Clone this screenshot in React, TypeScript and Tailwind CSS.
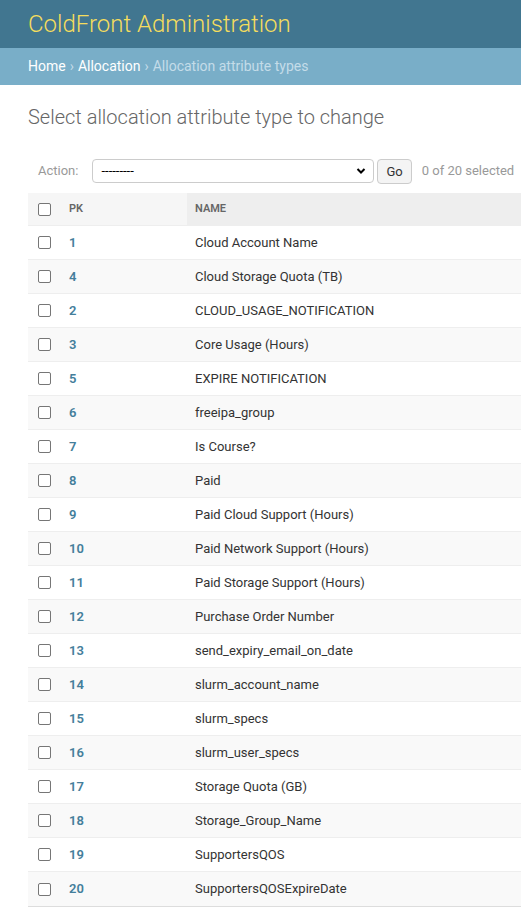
import React from "react";

const rows: [number, string][] = [
  [1, "Cloud Account Name"],
  [4, "Cloud Storage Quota (TB)"],
  [2, "CLOUD_USAGE_NOTIFICATION"],
  [3, "Core Usage (Hours)"],
  [5, "EXPIRE NOTIFICATION"],
  [6, "freeipa_group"],
  [7, "Is Course?"],
  [8, "Paid"],
  [9, "Paid Cloud Support (Hours)"],
  [10, "Paid Network Support (Hours)"],
  [11, "Paid Storage Support (Hours)"],
  [12, "Purchase Order Number"],
  [13, "send_expiry_email_on_date"],
  [14, "slurm_account_name"],
  [15, "slurm_specs"],
  [16, "slurm_user_specs"],
  [17, "Storage Quota (GB)"],
  [18, "Storage_Group_Name"],
  [19, "SupportersQOS"],
  [20, "SupportersQOSExpireDate"],
];

function Checkbox() {
  return <span className="block h-[13px] w-[13px] rounded-[2px] border border-[#767676] bg-white" />;
}

export default function App() {
  return (
    <div className="min-h-screen overflow-hidden bg-white font-['Roboto',sans-serif] text-[13px] text-[#333]">
      {/* Header */}
      <div className="flex h-[48px] items-center bg-[#417690] px-[28px]">
        <h1 className="text-[24px] font-light leading-none text-[#f5dd5d]">ColdFront Administration</h1>
      </div>

      {/* Breadcrumbs */}
      <div className="flex h-[37px] items-center bg-[#79aec8] px-[28px] text-[14px] text-white">
        <a className="text-white">Home</a>
        <span className="mx-[4px] text-[#c4dce8]">›</span>
        <a className="text-white">Allocation</a>
        <span className="mx-[4px] text-[#c4dce8]">›</span>
        <span className="text-[#c4dce8]">Allocation attribute types</span>
      </div>

      <div className="pl-[28px]">
        <h1 className="mt-[20px] text-[20px] font-light leading-[24px] text-[#666]">
          Select allocation attribute type to change
        </h1>

        {/* Actions */}
        <div className="mt-[22px] flex h-[42px] items-start pl-[10px] pt-[8px] whitespace-nowrap">
          <span className="flex h-[24px] items-center text-[13px] text-[#999]">Action:</span>
          <div className="relative ml-[14px] flex h-[24px] w-[282px] items-center rounded-[4px] border border-[#ccc] bg-white px-[8px] text-[13px] text-black">
            ---------
            <svg className="absolute right-[7px] top-[7px]" width="10" height="8" viewBox="0 0 10 8">
              <path d="M1.5 2 L5 5.5 L8.5 2" fill="none" stroke="#000" strokeWidth="2" />
            </svg>
          </div>
          <button className="ml-[3px] h-[25px] rounded-[4px] border border-[#ccc] bg-[#f4f4f4] px-[8px] text-[13px] text-[#333]">
            Go
          </button>
          <span className="ml-[10px] flex h-[24px] items-center text-[13px] text-[#999]">0 of 20 selected</span>
        </div>

        {/* Table */}
        <div className="border-b border-[#ddd]">
          <div className="grid h-[33px] grid-cols-[31px_128px_1fr] items-center border-b border-[#eee] bg-[#f6f6f6] text-[11px] font-semibold uppercase text-[#666]">
            <div className="pl-[10px]">
              <Checkbox />
            </div>
            <div className="pl-[10px]">PK</div>
            <div className="flex h-full items-center bg-[#eee] pl-[8px]">Name</div>
          </div>
          {rows.map(([pk, name], i) => (
            <div
              key={pk}
              className={`grid h-[34px] grid-cols-[31px_128px_1fr] items-center border-b border-[#eee] last:border-b-0 ${
                i % 2 === 1 ? "bg-[#f9f9f9]" : "bg-white"
              }`}
            >
              <div className="pl-[10px]">
                <Checkbox />
              </div>
              <div className="pl-[10px] font-semibold text-[#447e9b]">{pk}</div>
              <div className="pl-[8px] text-[#333]">{name}</div>
            </div>
          ))}
        </div>
      </div>
    </div>
  );
}
